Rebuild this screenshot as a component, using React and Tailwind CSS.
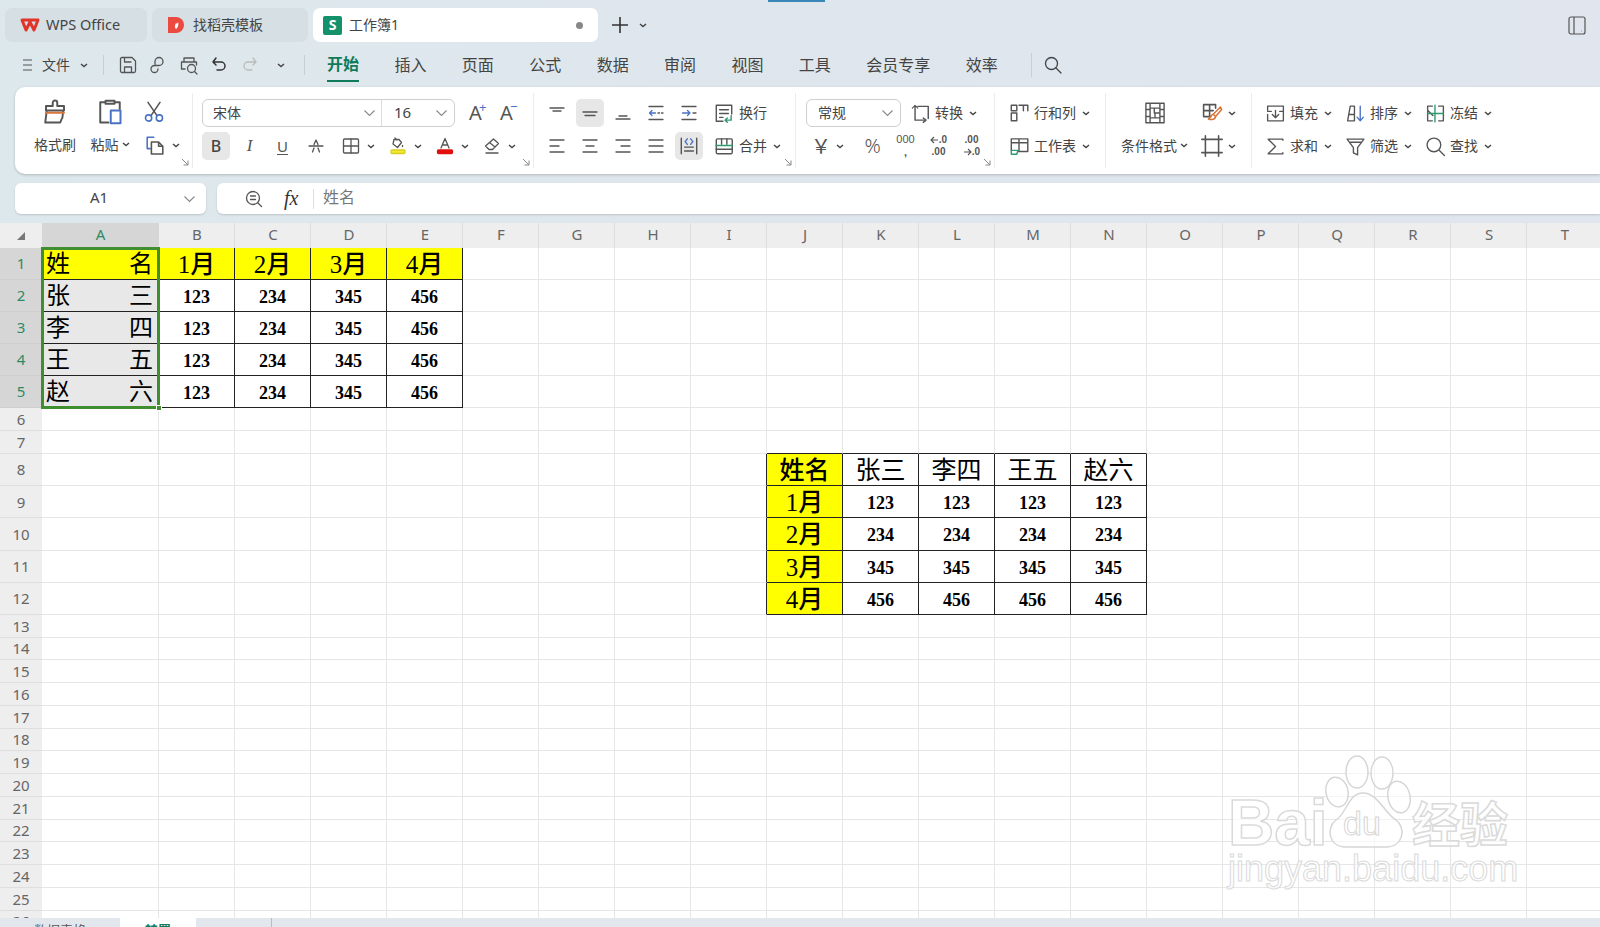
import React from "react";

const G = "#555";
const BLUE = "#4a72c4";
const GREEN = "#2f9a6e";
const ORANGE = "#d9763a";

const Ic = ({ s = 20, c = G, w = 1.3, children }) => (
  <svg width={s} height={s} viewBox="0 0 20 20" fill="none" stroke={c} strokeWidth={w} strokeLinecap="round" strokeLinejoin="round" className="shrink-0">
    {children}
  </svg>
);

const Caret = () => (
  <svg width="8" height="5" viewBox="0 0 8 5" fill="none" stroke="#444" strokeWidth="1.4" className="shrink-0">
    <path d="M1 1l3 2.6L7 1" />
  </svg>
);

const Chevron = () => (
  <svg width="13" height="8" viewBox="0 0 13 8" fill="none" stroke="#888" strokeWidth="1.1" className="shrink-0">
    <path d="M1.5 1.5l5 5 5-5" />
  </svg>
);

const Launcher = () => (
  <svg width="8" height="8" viewBox="0 0 8 8" fill="none" stroke="#888" strokeWidth="1" className="absolute right-[3px] bottom-[2px]">
    <path d="M1 1l6 6M7 2.5V7H2.5" />
  </svg>
);

const ArrowL = () => (
  <svg width="9" height="8" viewBox="0 0 9 8" fill="none" stroke="#555" strokeWidth="1.1" className="shrink-0">
    <path d="M8 4H1M4 1L1 4l3 3" />
  </svg>
);

const ArrowR = () => (
  <svg width="9" height="8" viewBox="0 0 9 8" fill="none" stroke="#555" strokeWidth="1.1" className="shrink-0">
    <path d="M1 4h7M5 1l3 3-3 3" />
  </svg>
);

// a few horizontal lines, used by all the align buttons
const Lines = ({ rows }) => (
  <Ic>
    {rows.map((r, i) => (
      <path key={i} d={`M${r[0]} ${r[2]}H${r[1]}`} />
    ))}
  </Ic>
);

const Btn = ({ active, children }) => (
  <div className="w-[33px] h-[28px] flex justify-center items-center shrink-0">
    <div className={active ? "w-[28px] h-[28px] rounded-[5px] bg-[#e7e7e7] flex justify-center items-center" : "w-[28px] h-[28px] flex justify-center items-center"}>
      {children}
    </div>
  </div>
);

const DropIcon = ({ children }) => (
  <div className="w-[47px] h-[28px] flex items-center pl-[9px] gap-[6px] shrink-0">
    {children}
    <Caret />
  </div>
);

const IconText = ({ icon, text, caret, className }) => (
  <div className={"h-[28px] flex items-center text-[14px] text-[#444] " + className}>
    {icon}
    <span className="ml-[4px] whitespace-nowrap -translate-y-px">{text}</span>
    {caret && <span className="ml-[6px]"><Caret /></span>}
  </div>
);

const Row = ({ children }) => <div className="h-[28px] flex items-center">{children}</div>;

const Divided = ({ w, className, children }) => (
  <div className={"relative h-[75px] mt-[6px] border-r border-[#ececec] shrink-0 " + w + " " + className}>
    {children}
  </div>
);

const menus = ["插入", "页面", "公式", "数据", "审阅", "视图", "工具", "会员专享", "效率"];
const colNames = "ABCDEFGHIJKLMNOPQRST".split("");
const rowNums = Array.from({ length: 26 }, (_, i) => i + 1);

const names = ["张三", "李四", "王五", "赵六"];
const months = ["1月", "2月", "3月", "4月"];
const vals = ["123", "234", "345", "456"];

const inT1 = (r, c) => r >= 1 && r <= 5 && c >= 0 && c <= 4;
const inT2 = (r, c) => r >= 8 && r <= 12 && c >= 9 && c <= 13;
const inAny = (r, c) => inT1(r, c) || inT2(r, c);

const getCell = (r, c) => {
  if (inT1(r, c)) {
    if (c === 0) {
      const pair = r === 1 ? "姓名" : names[r - 2];
      return { pair: pair.split(""), yellow: r === 1, sel: r > 1 };
    }
    if (r === 1) return { big: months[c - 1], yellow: true };
    return { num: vals[c - 1] };
  }
  if (inT2(r, c)) {
    if (c === 9) return { big: r === 8 ? "姓名" : months[r - 9], yellow: true };
    if (r === 8) return { head: names[c - 10] };
    return { num: vals[r - 9] };
  }
  return {};
};

const Cell = ({ r, c }) => {
  const d = getCell(r, c);
  const right = inAny(r, c) || inAny(r, c + 1) ? "border-r-[#222]" : "border-r-[#e6e6e6]";
  const bottom = inAny(r, c) || inAny(r + 1, c) ? "border-b-[#222]" : "border-b-[#e6e6e6]";
  const bg = d.yellow ? "bg-[#ffff00]" : d.sel ? "bg-[#e8e8e8]" : "bg-white";
  return (
    <div className={`border-r border-b ${right} ${bottom} ${bg} flex items-center justify-center overflow-hidden text-black font-['Liberation_Serif','Noto_Sans_CJK_SC',serif]`}>
      {d.pair && (
        <div className="w-full flex justify-between pl-[4px] pr-[5px] pt-[1px] text-[24px] leading-none">
          <span>{d.pair[0]}</span>
          <span>{d.pair[1]}</span>
        </div>
      )}
      {d.big && <span className="pt-[2px] text-[25px] leading-none font-medium">{d.big}</span>}
      {d.head && <span className="pt-[2px] text-[25px] leading-none">{d.head}</span>}
      {d.num && <span className="pt-[3px] text-[18px] leading-none font-bold">{d.num}</span>}
    </div>
  );
};

const Sheet = () => (
  <div className="relative h-[695px] overflow-hidden bg-white">
    <div className="grid grid-cols-[42px_117px_repeat(19,76px)] grid-rows-[25px_repeat(5,32px)_repeat(2,23px)_repeat(5,32.2px)_repeat(14,22.75px)] w-[1603px]">
      <div className="bg-[#eeeeee] flex items-center justify-center pr-[1px] pt-[1px]">
        <div className="w-0 h-0 border-l-[8px] border-l-transparent border-b-[8px] border-b-[#777]"></div>
      </div>
      {colNames.map((n, i) => (
        <div key={n} className={i === 0 ? "bg-[#d6d6d6] text-[#2f8a66] text-[15px] flex items-center justify-center" : "bg-[#eeeeee] border-r border-[#dedede] text-[#666] text-[15px] flex items-center justify-center pl-[1px]"}>
          <span className="-translate-y-px">{n}</span>
        </div>
      ))}
      {rowNums.map((r) => (
        <React.Fragment key={r}>
          <div className={r <= 5 ? "bg-[#d6d6d6] text-[#2f8a66] text-[15px] flex items-center justify-center border-b border-[#cfcfcf] overflow-hidden" : "bg-[#eeeeee] text-[#666] text-[15px] flex items-center justify-center border-b border-[#dedede] overflow-hidden"}>
            {r}
          </div>
          {colNames.map((n, c) => (
            <Cell key={n} r={r} c={c} />
          ))}
        </React.Fragment>
      ))}
    </div>
    {/* selection frame A1:A5 */}
    <div className="absolute left-[41px] top-[24px] w-[119px] h-[162px] border-[3px] border-[#3f8f30] pointer-events-none">
      <div className="absolute -right-[5px] -bottom-[5px] w-[6px] h-[6px] bg-[#3f8f30] border border-white"></div>
    </div>
  </div>
);

const Watermark = () => (
  <div className="absolute left-[1228px] top-[765px] w-[290px] h-[130px] pointer-events-none font-['Liberation_Sans',sans-serif]">
    <svg width="290" height="130" viewBox="0 0 290 130" fill="#ffffff" fillOpacity="0.6" stroke="#d6d6d6" strokeWidth="1.5" className="absolute left-0 top-0 overflow-visible">
      <ellipse cx="129" cy="7" rx="11" ry="16" />
      <ellipse cx="154" cy="8" rx="11" ry="16" />
      <ellipse cx="109" cy="27" rx="11" ry="15" transform="rotate(-12 109 27)" />
      <ellipse cx="171" cy="32" rx="11" ry="16" transform="rotate(-12 171 32)" />
      <path d="M135 28C120 28 118 50 108 55C98 62 100 82 118 82H158C176 82 178 62 168 55C158 50 150 28 135 28z" />
    </svg>
    <span className="absolute left-0 top-[26px] text-[64px] leading-[64px] font-bold text-white/70 [-webkit-text-stroke:1.5px_#dadada]">Bai</span>
    <span className="absolute left-[115px] top-[41px] text-[34px] leading-[34px] text-white/70 [-webkit-text-stroke:1px_#d6d6d6]">du</span>
    <span className="absolute left-[184px] top-[32px] text-[48px] leading-[48px] font-bold whitespace-nowrap text-white/70 font-['Noto_Sans_CJK_SC',sans-serif] [-webkit-text-stroke:1.5px_#dadada]">经验</span>
    <span className="absolute left-0 top-[86px] text-[36px] leading-[36px] whitespace-nowrap text-white/70 [-webkit-text-stroke:1px_#dadada]">jingyan.baidu.com</span>
  </div>
);

const App = () => {
  return (
    <div className="relative w-[1600px] h-[927px] overflow-hidden bg-gradient-to-r from-[#dde8ec] to-[#e0e5ee] text-[#444] font-['Noto_Sans','Noto_Sans_CJK_SC',sans-serif]">
      <div className="absolute left-[768px] top-0 w-[57px] h-[2px] bg-[#3a87b8]"></div>

      {/* tab bar */}
      <div className="h-[48px] pt-[8px] pl-[5px] flex gap-[5px]">
        <div className="w-[142px] h-[34px] rounded-[7px] bg-[#d6dfe4] flex items-center pl-[15px] text-[14.5px]">
          <svg width="20" height="16" viewBox="0 0 20 16" fill="none" stroke="#e0352b" strokeWidth="3" strokeLinejoin="round">
            <path d="M2 3l4 10 4-8 4 8 4-10z" />
          </svg>
          <span className="ml-[6px] whitespace-nowrap">WPS Office</span>
        </div>
        <div className="w-[156px] h-[34px] rounded-[7px] bg-[#d6dfe4] flex items-center pl-[15px] text-[14px]">
          <svg width="18" height="18" viewBox="0 0 18 18">
            <path d="M1 1h8a8 8 0 0 1 0 16H1z" fill="#ea4a3f" />
            <path d="M9 13c-2-2-1-4 0-6 1 1 1.500 1 2-1 1 2 0 6-2 7z" fill="#fff" />
          </svg>
          <span className="ml-[8px] whitespace-nowrap -translate-y-px">找稻壳模板</span>
        </div>
        <div className="w-[285px] h-[34px] rounded-[7px] bg-white flex items-center pl-[10px] text-[14px]">
          <div className="w-[19px] h-[19px] rounded-[2px] bg-[#12916b] text-white text-[14px] font-bold leading-none flex items-center justify-center">S</div>
          <span className="ml-[7px] whitespace-nowrap -translate-y-px">工作簿1</span>
          <div className="ml-auto mr-[15px] w-[7px] h-[7px] rounded-full bg-[#888]"></div>
        </div>
        <div className="ml-[8px] h-[34px] flex items-center">
          <svg width="18" height="18" viewBox="0 0 18 18" stroke="#333" strokeWidth="1.6">
            <path d="M9 1v16M1 9h16" />
          </svg>
          <span className="ml-[10px]"><Caret /></span>
        </div>
        <div className="ml-auto mr-[14px] h-[34px] flex items-center">
          <svg width="18" height="19" viewBox="0 0 18 19" fill="none" stroke="#555" strokeWidth="1.2">
            <rect x="1" y="1" width="16" height="17" rx="2" />
            <path d="M6 1v17M13 15h.5" />
          </svg>
        </div>
      </div>

      {/* menu row */}
      <div className="h-[39px] pb-[5px] flex items-center text-[16px]">
        <span className="ml-[22px]">
          <svg width="12" height="14" viewBox="0 0 12 14" stroke="#555" strokeWidth="1.2"><path d="M1 2h9M1 7h9M1 12h9" /></svg>
        </span>
        <span className="ml-[8px] text-[14px] -translate-y-px">文件</span>
        <span className="ml-[10px]"><Caret /></span>
        <div className="ml-[15px] w-px h-[20px] bg-[#c8d0d6]"></div>
        <span className="ml-[14px]">
          <Ic><path d="M2.500 4A1.500 1.500 0 0 1 4 2.500h10L17.500 6v10a1.500 1.500 0 0 1-1.500 1.500H4A1.500 1.500 0 0 1 2.500 16zM6.500 2.500V7H13M6.500 17.500V12h7v5.500" /></Ic>
        </span>
        <span className="ml-[10px]">
          <Ic><path d="M7 9.500V6.500a4 4 0 1 1 4 4H6.500a3.500 3.500 0 1 0 3.500 3.500" /></Ic>
        </span>
        <span className="ml-[11px]">
          <Ic><path d="M5 7V3h10v4M2.500 14V7h15v3M2.500 14h3.500" /><circle cx="12.500" cy="13.500" r="4" /><path d="M15.500 16.500l2.500 2.500" /></Ic>
        </span>
        <span className="ml-[10px]">
          <Ic c="#333" w="1.5"><path d="M7 3L4 7h8a4 4 0 0 1 0 8H8M4 7l3 3" /></Ic>
        </span>
        <span className="ml-[11px]">
          <Ic c="#bbb"><path d="M13 3l3 4H8a4 4 0 0 0 0 8h4M16 7l-3 3" /></Ic>
        </span>
        <span className="ml-[17px]"><Caret /></span>
        <div className="ml-[19px] w-px h-[20px] bg-[#c8d0d6]"></div>
        <div className="ml-[22px] self-stretch flex items-center border-b-2 border-[#0f7b5a] text-[#0f7b5a] font-bold">开始</div>
        {menus.map((m) => (
          <span key={m} className="ml-[35.4px] whitespace-nowrap">{m}</span>
        ))}
        <div className="ml-[33px] w-px h-[24px] bg-[#c8d0d6]"></div>
        <span className="ml-[11px]">
          <Ic c="#444"><circle cx="8.500" cy="8.500" r="6" /><path d="M13 13l5 5" /></Ic>
        </span>
      </div>

      {/* ribbon */}
      <div className="ml-[15px] h-[87px] bg-white rounded-l-[10px] shadow-[0_1px_3px_rgba(0,0,0,0.2)] flex">
        {/* clipboard */}
        <Divided w="w-[178px]" className="flex">
          <div className="ml-[19px] w-[42px] flex flex-col items-center mt-[5px] gap-[5px]">
            <div className="h-[28px] flex items-center justify-center">
              <Ic s={30}>
                <path d="M8.500 6V3.800a1.500 1.500 0 0 1 3 0V6H16v3H4V6zM4.500 9l-1 8h10l1-2.500M15.500 9l-.6 5" />
                <path d="M4 10.500h12" stroke={ORANGE} />
              </Ic>
            </div>
            <div className="h-[28px] flex items-center text-[14px] whitespace-nowrap -translate-y-px">格式刷</div>
          </div>
          <div className="ml-[13px] w-[42px] flex flex-col items-center mt-[5px] gap-[5px]">
            <div className="h-[28px] flex items-center justify-center">
              <Ic s={30}>
                <path d="M6 3.500H3.500V17H9M14 3.500h2.500V8M7 4.500V2.500h6v2z" />
                <rect x="10.500" y="9" width="6.500" height="8.500" stroke={BLUE} />
              </Ic>
            </div>
            <div className="h-[28px] flex items-center text-[14px] whitespace-nowrap gap-[3px] -translate-y-px">粘贴<Caret /></div>
          </div>
          <div className="ml-[10px] w-[46px] flex flex-col items-start mt-[5px] gap-[5px]">
            <div className="h-[28px] flex items-center pl-[1px]">
              <Ic s={24}>
                <path d="M5 2l7.500 11M15 2L7.500 13" />
                <circle cx="5.500" cy="15" r="2.600" stroke={BLUE} />
                <circle cx="14.500" cy="15" r="2.600" stroke={BLUE} />
              </Ic>
            </div>
            <div className="h-[28px] flex items-center gap-[5px] pl-[2px]">
              <Ic s={24}>
                <path d="M9 3.500H3.500V13H6" stroke={BLUE} />
                <path d="M7 7.500h6l3.500 3.500v6.500H7zM13 7.500V11h3.500" />
              </Ic>
              <Caret />
            </div>
          </div>
          <Launcher />
        </Divided>

        {/* font */}
        <Divided w="w-[341px]" className="pl-[9px] pt-[6px] flex flex-col gap-[5px]">
          <Row>
            <div className="w-[253px] h-[28px] rounded-[6px] border border-[#cfcfcf] flex items-center text-[14px] shrink-0">
              <div className="w-[179px] h-full border-r border-[#dcdcdc] flex items-center justify-between pl-[10px] pr-[5px]">
                <span className="-translate-y-px">宋体</span><Chevron />
              </div>
              <div className="flex-1 flex items-center justify-between pl-[12px] pr-[6px] text-[15px]">
                <span className="-translate-y-px">16</span><Chevron />
              </div>
            </div>
            <div className="ml-[5px] w-[31px] text-center text-[20px] leading-none relative text-[#555]">
              A<span className="absolute left-[19px] -top-[2px] text-[13px] text-[#4a72c4]">+</span>
            </div>
            <div className="w-[31px] text-center text-[20px] leading-none relative text-[#555]">
              A<span className="absolute left-[19px] -top-[3px] text-[13px] text-[#4a72c4]">−</span>
            </div>
          </Row>
          <Row>
            <div className="w-[28px] h-[28px] rounded-[5px] bg-[#e7e7e7] flex items-center justify-center text-[16px] font-medium shrink-0">B</div>
            <div className="ml-[3px] w-[33px] text-center text-[17px] italic font-['Liberation_Serif',serif] text-[#555]">I</div>
            <div className="w-[33px] text-center text-[15px] text-[#555] underline underline-offset-2">U</div>
            <div className="w-[33px] flex justify-center">
              <Ic><path d="M3 10h14M6.500 16L8 12M13.500 16L12 12M8 8.500L10 4l2 4.500" /></Ic>
            </div>
            <DropIcon>
              <Ic><rect x="2.500" y="3" width="15" height="14" rx="1" /><path d="M10 3v14M2.500 10h15" /></Ic>
            </DropIcon>
            <DropIcon>
              <Ic>
                <path d="M6 3.500l5 0 2.500 3-4 5-4.500-3.500zM7 2l2 2M14.500 9.500v1" />
                <rect x="3" y="14" width="14" height="3.500" rx="1" fill="#f5e935" stroke="#d8cc20" />
              </Ic>
            </DropIcon>
            <DropIcon>
              <Ic>
                <path d="M6 12L10 2.500 14 12M7.500 9h5" />
                <rect x="2.500" y="14" width="15" height="3.500" rx="1" fill="#e01010" stroke="#e01010" />
              </Ic>
            </DropIcon>
            <DropIcon>
              <Ic>
                <path d="M11.500 3l5 4.500-6 6H7L3.500 10zM7.500 6.500l5.500 4.500M4 17h12" />
              </Ic>
            </DropIcon>
          </Row>
          <Launcher />
        </Divided>

        {/* alignment */}
        <Divided w="w-[262px]" className="pl-[6px] pt-[6px] flex flex-col gap-[5px]">
          <Row>
            <Btn><Lines rows={[[3, 17, 5], [6, 14, 8]]} /></Btn>
            <Btn active><Lines rows={[[3, 17, 9], [5, 15, 12.5]]} /></Btn>
            <Btn><Lines rows={[[6, 14, 13], [3, 17, 16]]} /></Btn>
            <Btn>
              <Ic><path d="M3 3.500h14M3 16.500h14M12 10h1.500M15.500 10H17" /><path d="M9.500 10H3.500M6 7.500L3.500 10 6 12.500" stroke={BLUE} /></Ic>
            </Btn>
            <Btn>
              <Ic><path d="M3 3.500h14M3 16.500h14M14 10h3" /><path d="M3.500 10h7.500M8.500 7.500L11 10l-2.500 2.500" stroke={BLUE} /></Ic>
            </Btn>
            <div className="ml-[8px]">
              <IconText
                text="换行"
                icon={
                  <Ic s={22}>
                    <path d="M9 17.500H3V3h14v8M6 7h8M6 10.500h8M6 14h3" />
                    <path d="M16.500 12.500v4h-5M13 14.500l-2 2 2 2" stroke={GREEN} />
                  </Ic>
                }
              />
            </div>
          </Row>
          <Row>
            <Btn><Lines rows={[[3, 17, 4], [3, 12, 10], [3, 17, 16]]} /></Btn>
            <Btn><Lines rows={[[3, 17, 4], [6, 14, 10], [3, 17, 16]]} /></Btn>
            <Btn><Lines rows={[[3, 17, 4], [8, 17, 10], [3, 17, 16]]} /></Btn>
            <Btn><Lines rows={[[3, 17, 4], [3, 17, 10], [3, 17, 16]]} /></Btn>
            <Btn active>
              <Ic s={22}>
                <path d="M3 3v14M17 3v14M6 11h8M6 14.500h8" />
                <path d="M8.500 3.500L6.500 6l2 2.500M11.500 3.500l2 2.500-2 2.500" stroke={BLUE} />
              </Ic>
            </Btn>
            <div className="ml-[8px]">
              <IconText
                text="合并"
                caret
                icon={
                  <Ic s={22}>
                    <rect x="3" y="3.500" width="14.500" height="13.500" rx="1" />
                    <path d="M7.800 3.500v5M12.600 3.500v5" />
                    <path d="M3 9.500h14.500" stroke={GREEN} />
                    <path d="M3 13h14.500" />
                  </Ic>
                }
              />
            </div>
          </Row>
          <Launcher />
        </Divided>

        {/* number */}
        <Divided w="w-[199px]" className="pl-[10px] pt-[6px] flex flex-col gap-[5px]">
          <Row>
            <div className="w-[95px] h-[28px] rounded-[6px] border border-[#cfcfcf] flex items-center justify-between pl-[11px] pr-[6px] text-[14px] shrink-0">
              <span className="-translate-y-px">常规</span><Chevron />
            </div>
            <div className="ml-[8px]">
              <IconText
                text="转换"
                caret
                icon={
                  <Ic s={22}>
                    <path d="M3 5.500L5.500 3M5.500 3L8 5.500" strokeWidth="1" />
                    <path d="M8 4h9.500v11M5.500 4v12.500H14" />
                    <path d="M13 14.500l2.500 2-2.500 2" />
                  </Ic>
                }
              />
            </div>
          </Row>
          <Row>
            <div className="w-[50px] h-[28px] flex items-center pl-[5px] gap-[5px] shrink-0">
              <span className="w-[20px] text-center text-[20px] leading-none text-[#555] font-['Noto_Sans_CJK_SC',sans-serif]">￥</span>
              <Caret />
            </div>
            <div className="w-[33px] text-center text-[20px] leading-none text-[#555] font-light">%</div>
            <div className="w-[33px] text-center text-[11px] leading-[13px] text-[#555] font-['Liberation_Sans',sans-serif]">000<br /><span className="font-bold">,</span></div>
            <div className="w-[33px] flex flex-col items-center text-[10px] leading-[12px] font-bold text-[#555] font-['Liberation_Sans',sans-serif]">
              <div className="flex items-center"><ArrowL /><span>.0</span></div>
              <span>.00</span>
            </div>
            <div className="w-[33px] flex flex-col items-center text-[10px] leading-[12px] font-bold text-[#555] font-['Liberation_Sans',sans-serif]">
              <span>.00</span>
              <div className="flex items-center"><ArrowR /><span>.0</span></div>
            </div>
          </Row>
          <Launcher />
        </Divided>

        {/* rows and columns */}
        <Divided w="w-[111px]" className="pl-[13px] pt-[6px] flex flex-col gap-[5px]">
          <IconText
            text="行和列"
            caret
            icon={
              <Ic s={22}>
                <path d="M3 3h5v5H3zM3 10h5v7H3zM10 3h8v5M14 3v5" />
              </Ic>
            }
          />
          <IconText
            text="工作表"
            caret
            icon={
              <Ic s={22}>
                <path d="M3 14V3.500h15V15H9M3 7h15M10 3.500V15" />
                <path d="M3 14h6l-1 3.500H3z" stroke={GREEN} />
              </Ic>
            }
          />
        </Divided>

        {/* styles */}
        <Divided w="w-[146px]" className="flex pt-[6px]">
          <div className="ml-[15px] w-[77px] flex flex-col gap-[5px]">
            <div className="h-[28px] flex justify-center pr-[9px] items-center">
              <Ic s={28} w={1}>
                <path d="M6 3H3.500v14H6M14 3h2.500v14H14M3.500 7.500h3M3.500 12.500h3M13.500 7.500h3M13.500 12.500h3M6.500 3h7v14h-7zM6.500 6.500h7M6.500 13.500h7M9.500 6.500v3.500h4M10 13.500v-3" />
              </Ic>
            </div>
            <div className="h-[28px] flex items-center gap-[3px] text-[14px] whitespace-nowrap -translate-y-px">条件格式<Caret /></div>
          </div>
          <div className="ml-[2px] flex flex-col gap-[5px]">
            <div className="h-[28px] flex items-center gap-[4px]">
              <Ic s={24}>
                <path d="M9 13H3V3h10v3M3 8h8M8 3v10" />
                <path d="M17 5l-6 6 2 2 5-6zM11 11c-2 .5-2 3-4 4 3 1 6 0 6-2" stroke={ORANGE} />
              </Ic>
              <Caret />
            </div>
            <div className="h-[28px] flex items-center gap-[4px]">
              <Ic s={24}>
                <path d="M4.500 1.500v17M15.500 1.500v17M1.500 4.500h17M1.500 15.500h17" />
              </Ic>
              <Caret />
            </div>
          </div>
        </Divided>

        {/* editing */}
        <div className="pl-[13px] pt-[12px] flex flex-col gap-[5px]">
          <div className="flex">
            <IconText
              className="w-[80px]"
              text="填充"
              caret
              icon={
                <Ic s={21}>
                  <path d="M2.500 7V3h15v14h-15v-6M6 8H2.500M14 8h3.500M10 7v7M7 11l3 3 3-3" />
                </Ic>
              }
            />
            <IconText
              className="w-[80px]"
              text="排序"
              caret
              icon={
                <Ic s={21}>
                  <path d="M2.500 17L5 3h4v14zM4 11h5" />
                  <path d="M14.500 3v14M11.500 13.500l3 3.500 3-3.500" stroke={BLUE} />
                </Ic>
              }
            />
            <IconText
              className="w-[80px]"
              text="冻结"
              caret
              icon={
                <Ic s={21}>
                  <path d="M7 3H2.500v14H7M13 3h4.500v14H13M2.500 7l5 5" />
                  <path d="M9.500 2v16M2.500 10h15" stroke={GREEN} />
                </Ic>
              }
            />
          </div>
          <div className="flex">
            <IconText
              className="w-[80px]"
              text="求和"
              caret
              icon={
                <Ic s={21}>
                  <path d="M17 4V3H3l7 7-7 7h14v-1" />
                </Ic>
              }
            />
            <IconText
              className="w-[80px]"
              text="筛选"
              caret
              icon={
                <Ic s={21}>
                  <path d="M2 3h16l-6 8v7l-4-2v-5zM5 6h10" />
                </Ic>
              }
            />
            <IconText
              className="w-[80px]"
              text="查找"
              caret
              icon={
                <Ic s={21}>
                  <circle cx="8.500" cy="8.500" r="6.500" />
                  <path d="M13.500 13.500l5 5" />
                </Ic>
              }
            />
          </div>
        </div>
      </div>

      {/* formula bar */}
      <div className="mt-[9px] h-[31px] flex">
        <div className="ml-[15px] w-[191px] rounded-[6px] bg-white shadow-[0_1px_2px_rgba(0,0,0,0.15)] flex items-center">
          <div className="w-[168px] text-center text-[15px] -translate-y-px">A1</div>
          <Chevron />
        </div>
        <div className="ml-[11px] flex-1 rounded-l-[6px] bg-white shadow-[0_1px_2px_rgba(0,0,0,0.15)] flex items-center">
          <span className="ml-[27px]">
            <Ic s={20}>
              <circle cx="9" cy="9" r="6.500" />
              <path d="M6.500 7h5M6.500 10.500h5M14 14l3.500 3.500" />
            </Ic>
          </span>
          <span className="ml-[20px] w-[22px] text-[20px] italic font-['Liberation_Serif',serif] text-[#333] -translate-y-px">fx</span>
          <div className="ml-[7px] w-px h-[20px] bg-[#ddd]"></div>
          <span className="ml-[9px] text-[16px] text-[#777] -translate-y-[2px]">姓名</span>
        </div>
      </div>

      <div className="h-[9px]"></div>
      <Sheet />

      {/* sheet tabs, almost all of them cut off by the window */}
      <div className="h-[9px] flex bg-[#e2e7ee] overflow-hidden text-[13px] leading-[24px]">
        <div className="w-[120px] text-center text-[#555]">数据表格</div>
        <div className="w-[76px] bg-white text-center text-[#0f7b5a] font-bold">转置</div>
        <div className="w-[76px] border-r border-[#bbb]"></div>
      </div>

      <Watermark />
    </div>
  );
};

export default App;
